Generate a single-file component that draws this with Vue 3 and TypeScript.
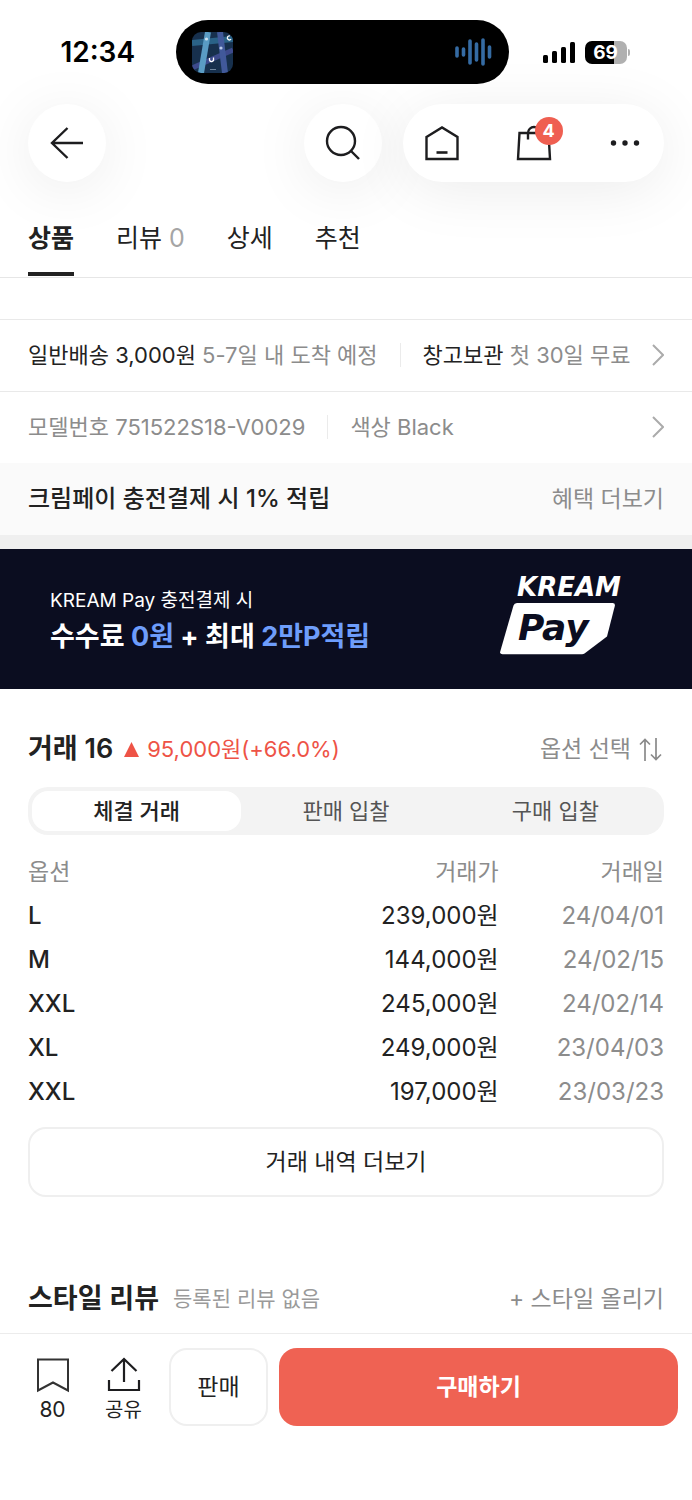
<script setup lang="ts">
import { ref } from 'vue'

interface Tab {
  id: string
  label: string
  count?: number
}

interface Trade {
  option: string
  price: string
  date: string
}

const tabs: Tab[] = [
  { id: 'product', label: '상품' },
  { id: 'review', label: '리뷰', count: 0 },
  { id: 'detail', label: '상세' },
  { id: 'recommend', label: '추천' },
]
const activeTab = ref('product')

const segments = ['체결 거래', '판매 입찰', '구매 입찰']
const activeSegment = ref(0)

const trades: Trade[] = [
  { option: 'L', price: '239,000원', date: '24/04/01' },
  { option: 'M', price: '144,000원', date: '24/02/15' },
  { option: 'XXL', price: '245,000원', date: '24/02/14' },
  { option: 'XL', price: '249,000원', date: '23/04/03' },
  { option: 'XXL', price: '197,000원', date: '23/03/23' },
]
</script>

<template>
  <div class="screen">
    <div class="status">
      <span class="clock">12:34</span>
      <div class="island">
        <svg class="map" viewBox="0 0 41 41" aria-hidden="true">
          <defs>
            <clipPath id="map-clip"><rect width="41" height="41" rx="9" /></clipPath>
          </defs>
          <g clip-path="url(#map-clip)">
            <rect width="41" height="41" fill="#17304d" />
            <path d="M0 11 L41 7" stroke="#2a6287" stroke-width="6" />
            <path d="M0 36 L41 18" stroke="#3d4a8c" stroke-width="5" />
            <path d="M28 0 L33 41" stroke="#41599a" stroke-width="6" />
            <path d="M16 0 L9 41" stroke="#5a9cc4" stroke-width="6" />
            <circle cx="14.500" cy="7" r="1.600" fill="#cfe3f2" />
            <circle cx="29" cy="16" r="1.600" fill="#b9c8e8" />
            <path d="M17.500 26v2a2 2 0 0 0 4-1v-1.500M38 4a2 2 0 1 0 1 3" fill="none" stroke="#fff" stroke-width="1.300" />
            <path d="M18 37.500h6" stroke="#70869e" stroke-width="1" />
          </g>
        </svg>
        <svg class="wave" viewBox="0 0 38 28" aria-hidden="true">
          <g stroke="#356ba3" stroke-width="3.600" stroke-linecap="round">
            <path d="M2 10v8M8.500 11v6M15 3v22M21.500 6v16M28 2v24M34.500 9v10" />
          </g>
        </svg>
      </div>
      <div class="indicators">
        <svg class="signal" viewBox="0 0 32 21" aria-hidden="true">
          <rect x="0" y="13" width="5" height="8" rx="1.500" />
          <rect x="9" y="9" width="5" height="12" rx="1.500" />
          <rect x="18" y="5" width="5" height="16" rx="1.500" />
          <rect x="27" y="0" width="5" height="21" rx="1.500" />
        </svg>
        <div class="battery"><span class="level">69</span></div>
        <i class="nub"></i>
      </div>
    </div>

    <header class="toolbar">
      <button class="round" type="button" aria-label="뒤로">
        <svg viewBox="0 0 36 36" width="36" height="36">
          <path d="M34 18H3M18.500 3L3 18l15.500 15" fill="none" stroke="#1d1d1f" stroke-width="2.400" />
        </svg>
      </button>
      <div class="tools">
        <button class="round" type="button" aria-label="검색">
          <svg viewBox="0 0 36 36" width="36" height="36">
            <circle cx="16" cy="16" r="14" fill="none" stroke="#1d1d1f" stroke-width="2.400" />
            <path d="M25.500 25.500L34 34" stroke="#1d1d1f" stroke-width="2.400" />
          </svg>
        </button>
        <div class="pill">
          <button type="button" aria-label="홈">
            <svg viewBox="0 0 36 36" width="36" height="36">
              <path d="M2.500 12L18 2.500 33.500 12v22h-31z" fill="none" stroke="#1d1d1f" stroke-width="2.400" />
              <path d="M12.500 27.500h11" stroke="#1d1d1f" stroke-width="2.600" />
            </svg>
          </button>
          <button class="cart" type="button" aria-label="장바구니">
            <svg viewBox="0 0 36 36" width="36" height="36">
              <path d="M3.500 8h29l1.500 26H2zM12 14.500V8a6 6 0 0 1 12 0" fill="none" stroke="#1d1d1f" stroke-width="2.400" />
            </svg>
            <span class="badge">4</span>
          </button>
          <button type="button" aria-label="더 보기">
            <svg viewBox="0 0 36 36" width="36" height="36" fill="#1d1d1f">
              <circle cx="6.500" cy="18" r="2.700" />
              <circle cx="18" cy="18" r="2.700" />
              <circle cx="29.500" cy="18" r="2.700" />
            </svg>
          </button>
        </div>
      </div>
    </header>

    <nav class="tabs">
      <a
        v-for="tab in tabs"
        :key="tab.id"
        :href="'#' + tab.id"
        :class="{ active: tab.id === activeTab }"
        @click.prevent="activeTab = tab.id"
      >{{ tab.label }}<span v-if="tab.count !== undefined" class="count">&nbsp;{{ tab.count }}</span></a>
    </nav>

    <main>
      <a class="info" href="#delivery">
        <span><b>일반배송 3,000원</b> 5-7일 내 도착 예정</span>
        <i class="bar"></i>
        <span><b>창고보관</b> 첫 30일 무료</span>
        <svg class="chevron" viewBox="0 0 12 22" aria-hidden="true"><path d="M1 1l10 10L1 21" /></svg>
      </a>
      <a class="info" href="#model">
        <span>모델번호 751522S18-V0029</span>
        <i class="bar"></i>
        <span>색상 Black</span>
        <svg class="chevron" viewBox="0 0 12 22" aria-hidden="true"><path d="M1 1l10 10L1 21" /></svg>
      </a>
      <div class="benefit">
        <strong>크림페이 충전결제 시 1% 적립</strong>
        <a href="#benefit">혜택 더보기</a>
      </div>

      <a class="banner" href="#pay">
        <span class="copy">
          <span class="small">KREAM Pay 충전결제 시</span>
          <span class="big">수수료 <em>0원</em> + 최대 <em>2만P적립</em></span>
        </span>
        <svg class="paylogo" viewBox="0 0 124 84" role="img" aria-label="KREAM Pay">
          <path d="M17 26H112.500q3 0 2.300 3L107 59.500 84.500 76.500q-1 .7-2.500.7H2.500q-3 0-2.200-3L13.500 28.500q.8-2.500 3.500-2.500z" fill="#fff" />
          <text x="17" y="19" class="logo-top">KREAM</text>
          <text x="18" y="63" class="logo-pay">Pay</text>
        </svg>
      </a>

      <section class="trades">
        <div class="heading">
          <h2>거래 16</h2>
          <span class="change">
            <svg viewBox="0 0 15 15" width="15" height="15" aria-hidden="true"><path d="M7.500 0L15 15H0z" fill="#ee5346" /></svg>
            95,000원(+66.0%)
          </span>
          <button class="option" type="button">
            옵션 선택
            <svg viewBox="0 0 23 23" width="23" height="23" aria-hidden="true">
              <path d="M6 23V1.500M1 6.500l5-5 5 5M17 0v21.500M12 16.500l5 5 5-5" fill="none" stroke="#8a8a8a" stroke-width="1.700" />
            </svg>
          </button>
        </div>

        <div class="segmented">
          <button
            v-for="(name, i) in segments"
            :key="name"
            type="button"
            :aria-pressed="i === activeSegment"
            :class="{ on: i === activeSegment }"
            @click="activeSegment = i"
          >{{ name }}</button>
        </div>

        <table>
          <thead>
            <tr><th>옵션</th><th>거래가</th><th>거래일</th></tr>
          </thead>
          <tbody>
            <tr v-for="(t, i) in trades" :key="i">
              <td>{{ t.option }}</td><td>{{ t.price }}</td><td>{{ t.date }}</td>
            </tr>
          </tbody>
        </table>
        <button class="more" type="button">거래 내역 더보기</button>
      </section>

      <section class="style-review">
        <h2>스타일 리뷰</h2>
        <span class="none">등록된 리뷰 없음</span>
        <a href="#upload">+ 스타일 올리기</a>
      </section>
    </main>

    <footer class="actions">
      <button class="icon" type="button" aria-label="저장 80">
        <svg viewBox="0 0 36 36" width="36" height="36">
          <path d="M3 2.500h30v31L18 25.500 3 33.500z" fill="none" stroke="#333" stroke-width="2" />
        </svg>
        <span class="num">80</span>
      </button>
      <button class="icon" type="button">
        <svg viewBox="0 0 36 36" width="36" height="36">
          <path d="M18 25V2M5.500 14L18 2l12.500 12M3 23v10h30V23" fill="none" stroke="#1d1d1f" stroke-width="2.200" />
        </svg>
        <span>공유</span>
      </button>
      <button class="sell" type="button">판매</button>
      <button class="buy" type="button">구매하기</button>
    </footer>
  </div>
</template>

<style>
body {
  margin: 0;
  background: #fff;
}
</style>

<style scoped>
.screen {
  min-height: 100vh;
  display: flex;
  flex-direction: column;
  background: #fff;
  color: #222;
  font-family: Inter, "Noto Sans CJK KR", sans-serif;
  font-size: 23px;
  line-height: 32px;
}
.screen * {
  box-sizing: border-box;
}
button {
  border: 0;
  padding: 0;
  background: none;
  color: inherit;
  font: inherit;
  cursor: pointer;
}
a {
  color: inherit;
  text-decoration: none;
}
svg {
  display: block;
  flex: none;
}
h2 {
  margin: 0;
  font-size: 27px;
  line-height: 36px;
  font-weight: 600;
}

.status {
  display: grid;
  grid-template-columns: 1fr 333px 1fr;
  align-items: center;
  padding: 20px 8px 20px 0;
}
.clock {
  padding-left: 20px;
  text-align: center;
  font-size: 28px;
  font-weight: 600;
  color: #000;
}
.island {
  height: 64px;
  border-radius: 32px;
  background: #000;
  display: flex;
  align-items: center;
  justify-content: space-between;
  padding: 0 16px;
}
.map {
  width: 41px;
  height: 41px;
}
.wave {
  width: 38px;
  height: 28px;
}
.indicators {
  display: flex;
  align-items: center;
  padding-left: 34px;
}
.signal {
  width: 32px;
  height: 21px;
}
.battery {
  width: 42px;
  height: 23px;
  margin-left: 10px;
  border-radius: 7px;
  background: linear-gradient(90deg, #000 69%, #b0b0b0 69%);
  color: #fff;
  font-size: 19px;
  line-height: 23px;
  font-weight: 700;
  text-align: center;
}
.nub {
  width: 2px;
  height: 7px;
  margin-left: 1px;
  border-radius: 0 2px 2px 0;
  background: #b0b0b0;
}

.toolbar {
  display: flex;
  justify-content: space-between;
  padding: 0 28px;
}
.tools {
  display: flex;
  gap: 21px;
}
.round,
.pill {
  height: 78px;
  border-radius: 39px;
  background: #fff;
  box-shadow: 0 8px 60px rgba(0, 0, 0, 0.08);
}
.round {
  width: 78px;
  display: flex;
  align-items: center;
  justify-content: center;
}
.pill {
  width: 261px;
  display: flex;
  align-items: center;
  justify-content: space-between;
  padding: 0 21px;
}
.cart {
  position: relative;
}
.badge {
  position: absolute;
  left: 19px;
  top: -8px;
  width: 28px;
  height: 28px;
  border-radius: 14px;
  background: #ef5f51;
  color: #fff;
  font-size: 18px;
  line-height: 28px;
  font-weight: 700;
  text-align: center;
}

.tabs {
  display: flex;
  gap: 42px;
  padding: 0 28px;
  margin-top: 30px;
  border-bottom: 1px solid #e6e6e6;
  font-size: 25px;
}
.tabs a {
  position: relative;
  padding: 10px 0 23px;
}
.tabs .active {
  font-weight: 600;
}
.tabs .active::after {
  content: "";
  position: absolute;
  left: 0;
  right: 0;
  bottom: 1px;
  height: 4px;
  background: #222;
}
.count {
  color: #a5a5a5;
}

main {
  padding-top: 41px;
}
.info {
  display: flex;
  align-items: center;
  height: 72px;
  padding: 0 28px 2px;
  border-top: 1px solid #e9e9e9;
  font-size: 22px;
  color: #8c8c8c;
}
.info b {
  font-weight: 400;
  color: #222;
}
.bar {
  width: 1px;
  height: 24px;
  margin: 0 22px;
  background: #ebebeb;
}
.chevron {
  width: 12px;
  height: 22px;
  margin-left: auto;
}
.chevron path {
  fill: none;
  stroke: #ababab;
  stroke-width: 2;
}
.benefit {
  display: flex;
  align-items: center;
  justify-content: space-between;
  height: 86px;
  padding: 0 28px;
  background: #fafafa;
  border-bottom: 14px solid #efefef;
}
.benefit strong {
  font-size: 24px;
  font-weight: 500;
}
.benefit a {
  color: #8c8c8c;
}

.banner {
  display: flex;
  align-items: center;
  justify-content: space-between;
  height: 140px;
  padding: 0 68px 0 50px;
  background: #0b0d20;
  color: #fff;
}
.copy {
  display: flex;
  flex-direction: column;
  padding-top: 4px;
}
.small {
  font-size: 19px;
}
.big {
  font-size: 27px;
  line-height: 40px;
  font-weight: 700;
}
.big em {
  font-style: normal;
  color: #6e9dfb;
}
.paylogo {
  width: 124px;
  height: 84px;
  overflow: visible;
}
.logo-top,
.logo-pay {
  font-family: "DejaVu Sans", sans-serif;
  font-weight: 700;
  font-style: italic;
}
.logo-top {
  font-size: 26px;
  fill: #fff;
}
.logo-pay {
  font-size: 36px;
  fill: #0b0d20;
}

.trades {
  padding: 40px 28px 0;
}
.heading {
  display: flex;
  align-items: center;
  height: 40px;
}
.change {
  display: flex;
  align-items: center;
  gap: 8px;
  margin-left: 11px;
  font-size: 22px;
  color: #ee5346;
}
.option {
  display: flex;
  align-items: center;
  gap: 8px;
  margin-left: auto;
  padding-right: 2px;
  color: #8c8c8c;
}
.segmented {
  display: flex;
  margin-top: 18px;
  padding: 4px;
  border-radius: 20px;
  background: #f3f3f3;
}
.segmented button {
  flex: 1;
  height: 40px;
  border-radius: 16px;
  font-size: 22px;
  line-height: 40px;
  color: #555;
}
.segmented .on {
  background: #fff;
  color: #222;
  font-weight: 500;
}
table {
  width: 100%;
  margin-top: 15px;
  border-collapse: collapse;
  table-layout: fixed;
}
th,
td {
  height: 44px;
  padding: 0;
  text-align: right;
  font-weight: 400;
}
td {
  font-size: 24px;
}
th,
td:last-child {
  color: #8c8c8c;
}
th:first-child,
td:first-child {
  text-align: left;
}
td:first-child {
  font-weight: 500;
}
th:last-child {
  width: 26%;
}
.more {
  width: 100%;
  height: 70px;
  margin-top: 13px;
  border: 2px solid #efefef;
  border-radius: 18px;
}

.style-review {
  display: flex;
  align-items: center;
  height: 36px;
  margin: 84px 28px 16px;
}
.none {
  margin-left: 14px;
  font-size: 21px;
  color: #9a9a9a;
}
.style-review a {
  margin-left: auto;
  color: #8c8c8c;
}

.actions {
  flex: 1;
  display: flex;
  align-items: flex-start;
  padding: 14px 14px 74px 20px;
  border-top: 1px solid #ececec;
}
.icon {
  width: 65px;
  height: 78px;
  margin-right: 6px;
  padding-top: 9px;
  display: flex;
  flex-direction: column;
  align-items: center;
  gap: 2px;
  font-size: 20px;
  line-height: 30px;
}
.icon .num {
  font-size: 21px;
}
.sell {
  width: 99px;
  height: 78px;
  margin: 0 11px 0 7px;
  border: 2px solid #efefef;
  border-radius: 18px;
}
.buy {
  flex: 1;
  height: 78px;
  border-radius: 18px;
  background: #ef6253;
  color: #fff;
  font-weight: 600;
}
</style>
